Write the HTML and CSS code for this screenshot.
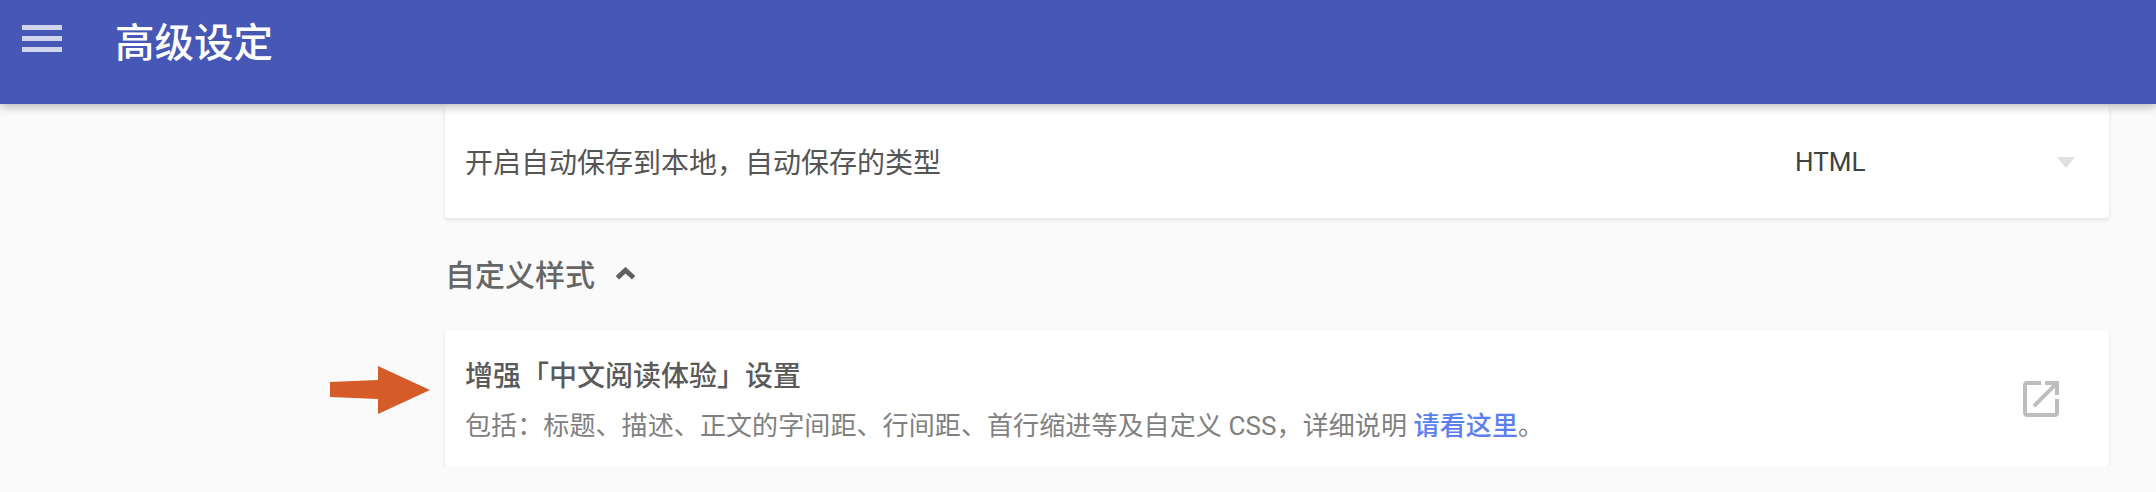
FILE: index.html
```html
<!DOCTYPE html>
<html>
<head>
<meta charset="utf-8">
<title>高级设定</title>
<link rel="stylesheet" href="styles.css">
</head>
<body>

<header class="appbar">
  <div class="menuIcon"><span></span><span></span><span></span></div>
  <div class="appTitle">高级设定</div>
</header>

<div class="content">
  <div class="card rowAuto">
    <div class="rowLabel">开启自动保存到本地，自动保存的类型</div>
    <div class="select">
      <span>HTML</span>
      <i class="caret"></i>
    </div>
  </div>

  <div class="sectionHead">
    <span>自定义样式</span>
    <svg class="chevron" viewBox="0 0 19 12"><path d="M2 10 L9.5 3 L17 10" /></svg>
  </div>

  <div class="card rowEnhance">
    <!-- annotation arrow painted over the screenshot -->
    <svg class="arrow" viewBox="0 0 100 48"><polygon points="0,16 48,14 48,0 100,24 48,48 48,33 0,31" /></svg>
    <div class="rowText">
      <div class="rowLabel strong">增强「中文阅读体验」设置</div>
      <div class="hint">包括：标题、描述、正文的字间距、行间距、首行缩进等及自定义 CSS，详细说明 <a href="#">请看这里</a>。</div>
    </div>
    <svg class="openIcon" viewBox="0 0 24 24"><path d="M19 19H5V5h7V3H5c-1.11 0-2 .9-2 2v14c0 1.1.89 2 2 2h14c1.1 0 2-.9 2-2v-7h-2v7zM14 3v2h3.59l-9.83 9.83 1.41 1.41L19 6.41V10h2V3h-7z" /></svg>
  </div>
</div>

</body>
</html>
```

FILE: styles.css
```css
body {
  margin: 0;
  background-color: #FAFAFA;
  font-family: "Roboto", "Noto Sans CJK SC", sans-serif;
  overflow: hidden;
}
.appbar {
  position: relative;
  z-index: 2;
  display: flex;
  align-items: center;
  gap: 53px;
  height: 78px;
  padding: 0 0 26px 22px;
  background-color: #4657B5;
  box-shadow: 0 2px 10px rgba(0, 0, 0, 0.3);
}
.menuIcon {
  display: flex;
  flex-direction: column;
  gap: 6px;
  width: 40px;
  margin-top: -2px;
}
.menuIcon span {
  height: 5px;
  background-color: rgba(255, 255, 255, 0.75);
  filter: blur(0.5px);
}
.appTitle {
  color: #FFFFFF;
  font-size: 39.5px;
  font-weight: 500;
}
.content {
  margin: 0 47px 0 445px;
}
.card {
  display: flex;
  align-items: center;
  background-color: #FFFFFF;
  border-radius: 4px;
  box-shadow: 0 2px 4px rgba(0, 0, 0, 0.1);
}
.rowAuto {
  justify-content: space-between;
  height: 114px;
  padding: 0 34px 0 20px;
}
.rowLabel {
  padding-top: 6px;
  color: #555555;
  font-size: 28px;
  line-height: 36px;
}
.rowLabel.strong {
  color: #5A5A5A;
  font-weight: 500;
}
.select {
  display: flex;
  align-items: center;
  justify-content: space-between;
  width: 280px;
  padding-top: 2px;
  color: #424242;
  font-size: 26px;
}
.caret {
  width: 0;
  height: 0;
  border-left: 9px solid transparent;
  border-right: 9px solid transparent;
  border-top: 11px solid #E0E0E0;
}
.sectionHead {
  display: flex;
  align-items: center;
  gap: 20px;
  height: 110px;
  padding: 0 0 2px 0;
  color: #666666;
  font-size: 30px;
  font-weight: 500;
}
.chevron {
  width: 21px;
  height: 13px;
  fill: none;
  stroke: #5F5F5F;
  stroke-width: 4.5;
}
.rowEnhance {
  position: relative;
  justify-content: space-between;
  height: 137px;
  padding: 0 44px 0 20px;
}
.rowText {
  display: flex;
  flex-direction: column;
  gap: 13px;
}
.hint {
  color: #808080;
  font-size: 26px;
  line-height: 36px;
  letter-spacing: 0.1px;
}
.hint a {
  color: #5B7FF0;
  font-weight: 500;
  text-decoration: none;
}
.openIcon {
  width: 48px;
  height: 48px;
  fill: #BDBDBD;
}
.arrow {
  position: absolute;
  left: -115px;
  top: 36px;
  width: 100px;
  height: 48px;
  fill: #D55B28;
}
```
